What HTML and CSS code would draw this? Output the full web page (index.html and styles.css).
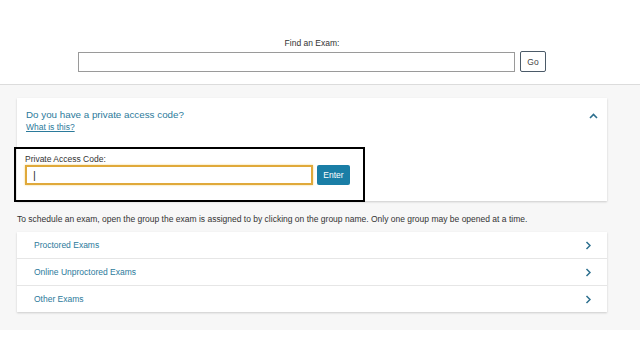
FILE: index.html
```html
<!DOCTYPE html>
<html lang="en">

<head>
    <meta charset="UTF-8">
    <meta name="viewport" content="width=device-width, initial-scale=1.0">
    <title>Find an Exam</title>
    <link rel="stylesheet" href="styles.css">
</head>

<body>
    <div class="header">
        <div class="search">
            <label class="search-label" for="examSearch">Find an Exam:</label>
            <div class="search-row">
                <input id="examSearch" class="search-input" type="text">
                <button class="go-btn">Go</button>
            </div>
        </div>
    </div>

    <div class="main">
        <div class="card access">
            <div class="access-head">
                <div>
                    <div class="access-title">Do you have a private access code?</div>
                    <a class="what-link" href="#">What is this?</a>
                </div>
                <svg class="chev-up" width="9" height="6" viewBox="0 0 9 6">
                    <path d="M1 5 L4.5 1.5 L8 5" fill="none" stroke="#2c6f8e" stroke-width="1.6"/>
                </svg>
            </div>
            <div class="code-box">
                <label class="code-label" for="codeInput">Private Access Code:</label>
                <div class="code-row">
                    <input id="codeInput" class="code-input" type="text" value="|">
                    <button class="enter-btn">Enter</button>
                </div>
            </div>
        </div>

        <p class="hint">To schedule an exam, open the group the exam is assigned to by clicking on the group name. Only one group may be opened at a time.</p>

        <div class="card groups">
            <div class="group-row">
                <span>Proctored Exams</span>
                <svg class="chev" width="6" height="9" viewBox="0 0 6 9"><path d="M1.5 1 L5 4.5 L1.5 8" fill="none" stroke="#2c6f8e" stroke-width="1.5"/></svg>
            </div>
            <div class="group-row">
                <span>Online Unproctored Exams</span>
                <svg class="chev" width="6" height="9" viewBox="0 0 6 9"><path d="M1.5 1 L5 4.5 L1.5 8" fill="none" stroke="#2c6f8e" stroke-width="1.5"/></svg>
            </div>
            <div class="group-row">
                <span>Other Exams</span>
                <svg class="chev" width="6" height="9" viewBox="0 0 6 9"><path d="M1.5 1 L5 4.5 L1.5 8" fill="none" stroke="#2c6f8e" stroke-width="1.5"/></svg>
            </div>
        </div>
    </div>
</body>

</html>
```

FILE: styles.css
```css
body {
    font-family: "Liberation Sans", Arial, sans-serif;
    font-size: 8.5px;
    margin: 0;
    padding: 0;
    background-color: #fff;
    color: #333;
}

.header {
    height: 85px;
    border-bottom: 1px solid #dcdcdc;
    box-sizing: border-box;
}

.search {
    width: 468px;
    margin-left: 78px;
    padding-top: 38px;
}

.search-label {
    display: block;
    text-align: center;
    color: #333;
    height: 13px;
    line-height: 10px;
}

.search-row {
    display: flex;
    gap: 5px;
}

.search-input {
    flex: 1;
    height: 20px;
    box-sizing: border-box;
    border: 1px solid #9a9a9a;
    margin: 1px 0 0;
    padding: 0 4px;
}

.go-btn {
    width: 26px;
    height: 21px;
    box-sizing: border-box;
    border: 1px solid #4b5a68;
    border-radius: 2px;
    background-color: #fff;
    color: #444;
    font-family: inherit;
    font-size: 8.5px;
    padding: 0;
}

.main {
    background-color: #f7f7f7;
    padding: 13px 33px 18px 17px;
}

.card {
    background-color: #fff;
    box-shadow: 0 1px 2px rgba(0, 0, 0, 0.18);
}

.access {
    height: 103px;
    box-sizing: border-box;
    padding: 9px 0 0;
}

.access-head {
    display: flex;
    justify-content: space-between;
    padding: 0 9px;
    height: 40px;
}

.access-title {
    color: #2b7a9b;
    font-size: 9.8px;
    line-height: 15px;
}

.what-link {
    color: #2b7a9b;
    font-size: 8.5px;
    line-height: 11px;
    text-decoration: underline;
}

.chev-up {
    margin-top: 6px;
    margin-right: 0;
}

.code-box {
    width: 351px;
    height: 55px;
    box-sizing: border-box;
    margin-left: -3px;
    border: 2px solid #000;
    padding: 5px 0 0 9px;
}

.code-label {
    display: block;
    height: 11px;
    line-height: 10px;
}

.code-row {
    display: flex;
    gap: 4px;
}

.code-input {
    width: 288px;
    height: 20px;
    box-sizing: border-box;
    border: 2px solid #e0a93a;
    box-shadow: 0 0 2px #f3d680;
    padding: 0 6px;
    font-size: 11px;
    color: #333;
    font-family: inherit;
    outline: none;
}

.enter-btn {
    width: 33px;
    height: 20px;
    border: none;
    border-radius: 2px;
    background-color: #1a7ea6;
    color: #fff;
    font-family: inherit;
    font-size: 8.5px;
    padding: 0;
}

.hint {
    margin: 12px 0 6px;
    line-height: 13px;
}

.group-row {
    display: flex;
    justify-content: space-between;
    align-items: center;
    height: 27px;
    box-sizing: border-box;
    padding: 0 16px 0 17px;
    color: #2b7a9b;
    border-top: 1px solid #e6e6e6;
}

.group-row:first-child {
    border-top: none;
    height: 26px;
}
```
